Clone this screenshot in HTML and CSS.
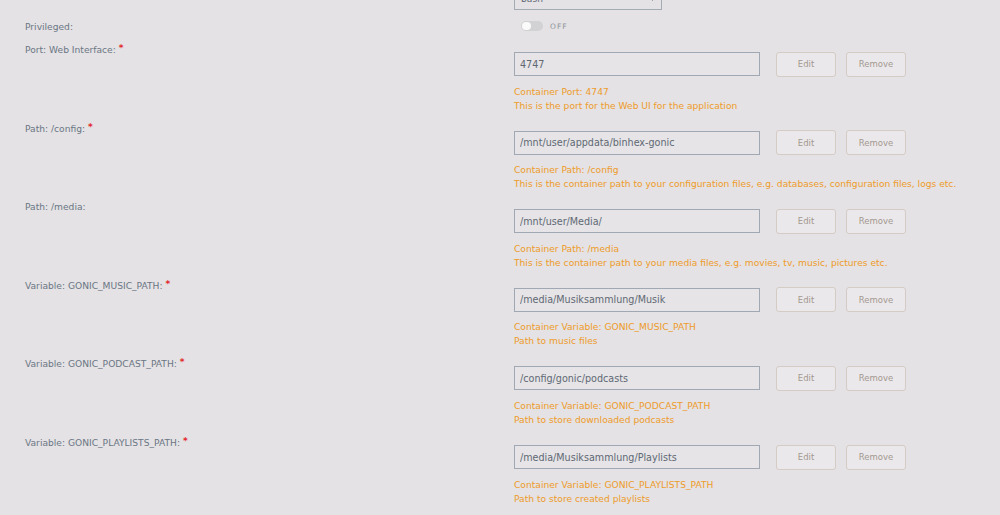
FILE: index.html
```html
<!DOCTYPE html>
<html lang="en">
<head>
  <meta charset="UTF-8">
  <meta name="viewport" content="width=device-width, initial-scale=1.0">
  <title>Container Settings</title>
  <link rel="stylesheet" href="styles.css">
</head>
<body>
  <div id="settings">
    <div class="row shell-row">
      <div class="label">Shell:</div>
      <div class="value">
        <div class="select">
          <span>bash</span>
          <svg class="chevron" width="7" height="5" viewBox="0 0 7 5"><path d="M1 1l2.5 2.5L6 1" fill="none" stroke="#8a8f98" stroke-width="1"/></svg>
        </div>
      </div>
    </div>

    <div class="row toggle-row">
      <div class="label">Privileged:</div>
      <div class="value">
        <div class="switch"><span class="knob"></span></div>
        <span class="switch-text">OFF</span>
      </div>
    </div>

    <div class="row">
      <div class="label">Port: Web Interface: <span class="req">*</span></div>
      <div class="value">
        <div class="field-line">
          <input type="text" class="field" value="4747">
          <button class="btn">Edit</button>
          <button class="btn">Remove</button>
        </div>
        <div class="desc">Container Port: 4747<br>This is the port for the Web UI for the application</div>
      </div>
    </div>

    <div class="row">
      <div class="label">Path: /config: <span class="req">*</span></div>
      <div class="value">
        <div class="field-line">
          <input type="text" class="field" value="/mnt/user/appdata/binhex-gonic">
          <button class="btn">Edit</button>
          <button class="btn">Remove</button>
        </div>
        <div class="desc">Container Path: /config<br>This is the container path to your configuration files, e.g. databases, configuration files, logs etc.</div>
      </div>
    </div>

    <div class="row">
      <div class="label">Path: /media:</div>
      <div class="value">
        <div class="field-line">
          <input type="text" class="field" value="/mnt/user/Media/">
          <button class="btn">Edit</button>
          <button class="btn">Remove</button>
        </div>
        <div class="desc">Container Path: /media<br>This is the container path to your media files, e.g. movies, tv, music, pictures etc.</div>
      </div>
    </div>

    <div class="row">
      <div class="label">Variable: GONIC_MUSIC_PATH: <span class="req">*</span></div>
      <div class="value">
        <div class="field-line">
          <input type="text" class="field" value="/media/Musiksammlung/Musik">
          <button class="btn">Edit</button>
          <button class="btn">Remove</button>
        </div>
        <div class="desc">Container Variable: GONIC_MUSIC_PATH<br>Path to music files</div>
      </div>
    </div>

    <div class="row">
      <div class="label">Variable: GONIC_PODCAST_PATH: <span class="req">*</span></div>
      <div class="value">
        <div class="field-line">
          <input type="text" class="field" value="/config/gonic/podcasts">
          <button class="btn">Edit</button>
          <button class="btn">Remove</button>
        </div>
        <div class="desc">Container Variable: GONIC_PODCAST_PATH<br>Path to store downloaded podcasts</div>
      </div>
    </div>

    <div class="row">
      <div class="label">Variable: GONIC_PLAYLISTS_PATH: <span class="req">*</span></div>
      <div class="value">
        <div class="field-line">
          <input type="text" class="field" value="/media/Musiksammlung/Playlists">
          <button class="btn">Edit</button>
          <button class="btn">Remove</button>
        </div>
        <div class="desc">Container Variable: GONIC_PLAYLISTS_PATH<br>Path to store created playlists</div>
      </div>
    </div>
  </div>
</body>
</html>
```

FILE: styles.css
```css
body {
  margin: 0;
  background-color: #e4e2e4;
  font-family: "DejaVu Sans", sans-serif;
  font-size: 9.15px;
  color: #6b7684;
  overflow: hidden;
}
#settings {
  padding-left: 25px;
}
.row {
  display: grid;
  grid-template-columns: 489px 1fr;
  padding-bottom: 9px;
}
.label {
  line-height: 14px;
}
.req {
  color: #e3262b;
  font-weight: bold;
  font-size: 9px;
  position: relative;
  top: -2px;
}
.shell-row {
  margin-top: -12px;
  padding-bottom: 0;
}
.shell-row .label {
  visibility: hidden;
}
.select {
  height: 22px;
  border: 1px solid #a3abb5;
  display: flex;
  align-items: center;
  justify-content: space-between;
  padding: 0 5px 0 6px;
  box-sizing: border-box;
  width: 148px;
  color: #606874;
}
.toggle-row {
  padding-top: 10px;
  padding-bottom: 9px;
}
.toggle-row .value {
  display: flex;
  align-items: center;
  padding-left: 7px;
  height: 12px;
}
.switch {
  width: 22px;
  height: 10px;
  border-radius: 5px;
  background-color: #d2d1d4;
  position: relative;
}
.knob {
  position: absolute;
  left: 1px;
  top: 1px;
  width: 9px;
  height: 8px;
  border-radius: 4px;
  background-color: #fafafa;
}
.switch-text {
  margin-left: 7px;
  font-size: 7.5px;
  letter-spacing: 1px;
  color: #8f949c;
}
.field-line {
  display: flex;
  align-items: center;
  margin-top: 8.6px;
  height: 25px;
}
.field {
  width: 246px;
  height: 24px;
  box-sizing: border-box;
  border: 1px solid #a0a8b3;
  background-color: #e6e4e6;
  padding: 0 5px;
  font-family: "DejaVu Sans", sans-serif;
  font-size: 9.6px;
  color: #606874;
  outline: none;
}
.btn {
  width: 60px;
  height: 25px;
  margin-left: 10px;
  border: 1px solid #d3cbc4;
  border-radius: 3px;
  background-color: #ebe8eb;
  font-family: "DejaVu Sans", sans-serif;
  font-size: 8.5px;
  color: #a29890;
  padding: 0;
}
.field + .btn {
  margin-left: 16px;
}
.desc {
  margin-top: 8px;
  line-height: 14px;
  color: #ee9b2a;
}
```
